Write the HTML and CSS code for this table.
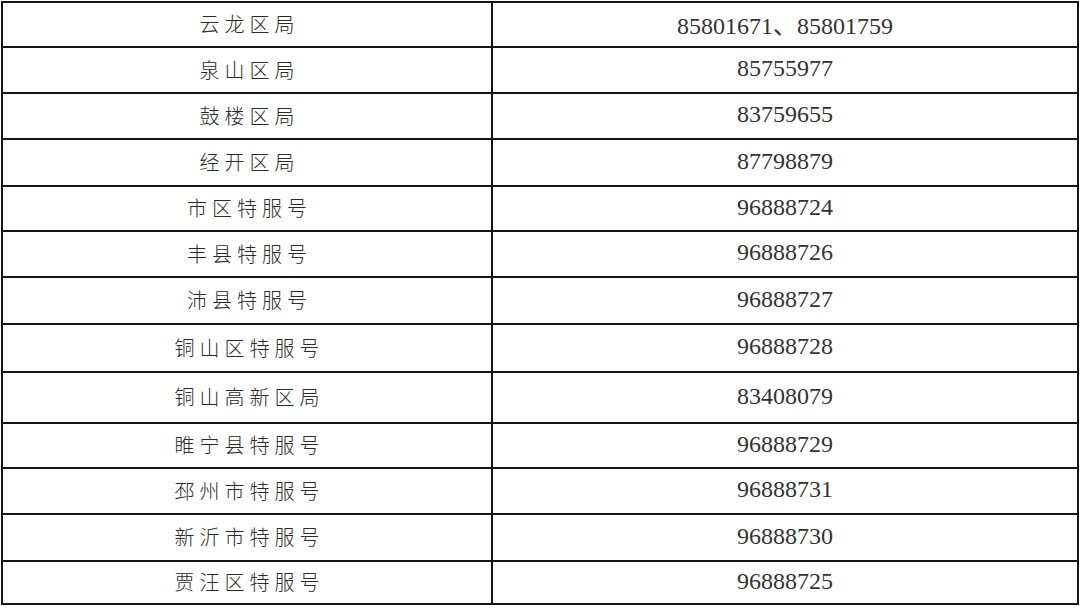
FILE: index.html
```html
<!DOCTYPE html>
<html lang="zh-CN">
<head>
<meta charset="utf-8">
<title>特服号</title>
<link rel="stylesheet" href="styles.css">
</head>
<body>
<table class="phones">
  <tbody>
    <tr class="r1"><td class="name">云龙区局</td><td class="num">85801671、85801759</td></tr>
    <tr class="r2"><td class="name">泉山区局</td><td class="num">85755977</td></tr>
    <tr class="r3"><td class="name">鼓楼区局</td><td class="num">83759655</td></tr>
    <tr class="r4"><td class="name">经开区局</td><td class="num">87798879</td></tr>
    <tr class="r5"><td class="name">市区特服号</td><td class="num">96888724</td></tr>
    <tr class="r6"><td class="name">丰县特服号</td><td class="num">96888726</td></tr>
    <tr class="r7"><td class="name">沛县特服号</td><td class="num">96888727</td></tr>
    <tr class="r8"><td class="name">铜山区特服号</td><td class="num">96888728</td></tr>
    <tr class="r9"><td class="name">铜山高新区局</td><td class="num">83408079</td></tr>
    <tr class="r10"><td class="name">睢宁县特服号</td><td class="num">96888729</td></tr>
    <tr class="r11"><td class="name">邳州市特服号</td><td class="num">96888731</td></tr>
    <tr class="r12"><td class="name">新沂市特服号</td><td class="num">96888730</td></tr>
    <tr class="r13"><td class="name">贾汪区特服号</td><td class="num">96888725</td></tr>
  </tbody>
</table>
</body>
</html>
```
FILE: styles.css
```css
html, body {
  margin: 0;
  padding: 0;
  background: #ffffff;
}
body {
  padding: 1px 0 0 1px;
}
.phones {
  border-collapse: collapse;
  width: 1078px;
  table-layout: fixed;
  color: #2a2a2a;
}
.phones td {
  border: 2px solid #161616;
  padding: 0;
  text-align: center;
  vertical-align: middle;
}
.phones td.name {
  width: 488px;
  font-family: "Noto Sans CJK SC", "Noto Sans", sans-serif;
  font-weight: 300;
  font-size: 20px;
  letter-spacing: 5px;
  text-indent: 5px;
  padding-bottom: 2px;
}
.phones td.num {
  font-family: "Liberation Serif", "Noto Sans CJK SC", serif;
  font-size: 24px;
  color: #333333;
  padding-bottom: 3px;
}
.r1 { height: 45px; }
.r2 { height: 46px; }
.r3 { height: 46px; }
.r4 { height: 47px; }
.r5 { height: 45px; }
.r6 { height: 46px; }
.r7 { height: 47px; }
.r8 { height: 48px; }
.r9 { height: 51px; }
.r10 { height: 45px; }
.r11 { height: 46px; }
.r12 { height: 47px; }
.r13 { height: 43px; }
```
